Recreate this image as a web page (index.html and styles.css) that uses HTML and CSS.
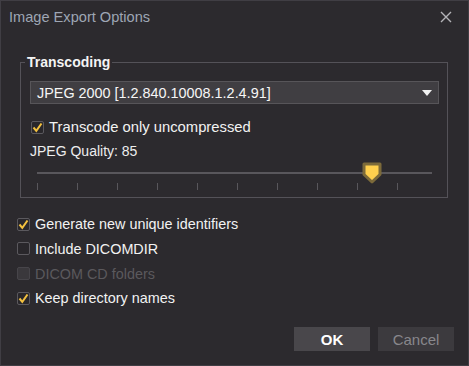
FILE: index.html
```html
<!DOCTYPE html>
<html lang="en">
<head>
    <meta charset="UTF-8">
    <title>Image Export Options</title>
    <link rel="stylesheet" href="styles.css">
</head>
<body>
    <div class="dialog">
        <div class="title-bar">
            <span class="title">Image Export Options</span>
            <svg class="close" width="12" height="12" viewBox="0 0 12 12">
                <path d="M1 1 L11 11 M11 1 L1 11" stroke="#b4b4b8" stroke-width="1.4" fill="none"/>
            </svg>
        </div>

        <fieldset class="group">
            <legend>Transcoding</legend>
            <div class="combo">
                <span>JPEG 2000 [1.2.840.10008.1.2.4.91]</span>
                <svg class="arrow" width="10" height="6" viewBox="0 0 10 6"><path d="M0 0 H10 L5 6 Z" fill="#f2f2f2"/></svg>
            </div>
            <label class="check checked">
                <span class="box"><svg width="11" height="11" viewBox="0 0 11 11"><path d="M1.5 5.5 L4.3 8.8 L9.5 1.5" stroke="#f3c13f" stroke-width="2" fill="none"/></svg></span>
                Transcode only uncompressed
            </label>
            <div class="quality">JPEG Quality: 85</div>
            <div class="slider">
                <div class="track"></div>
                <div class="ticks"></div>
                <svg class="handle" width="20" height="22" viewBox="0 0 20 22">
                    <path d="M2 2 H18 V12.5 L10 20 L2 12.5 Z" fill="#ffd04e" stroke="#7c6a3a" stroke-width="3" stroke-linejoin="round"/>
                </svg>
            </div>
        </fieldset>

        <div class="options">
            <label class="check checked">
                <span class="box"><svg width="11" height="11" viewBox="0 0 11 11"><path d="M1.5 5.5 L4.3 8.8 L9.5 1.5" stroke="#f3c13f" stroke-width="2" fill="none"/></svg></span>
                Generate new unique identifiers
            </label>
            <label class="check">
                <span class="box"></span>
                Include DICOMDIR
            </label>
            <label class="check disabled">
                <span class="box"></span>
                DICOM CD folders
            </label>
            <label class="check checked">
                <span class="box"><svg width="11" height="11" viewBox="0 0 11 11"><path d="M1.5 5.5 L4.3 8.8 L9.5 1.5" stroke="#f3c13f" stroke-width="2" fill="none"/></svg></span>
                Keep directory names
            </label>
        </div>

        <div class="buttons">
            <button class="ok">OK</button>
            <button class="cancel">Cancel</button>
        </div>
    </div>
</body>
</html>
```

FILE: styles.css
```css
body {
    margin: 0;
    padding: 0;
    background-color: #2c2a2e;
    font-family: 'Liberation Sans', Arial, sans-serif;
    color: #f0f0f0;
}

.dialog {
    width: 469px;
    height: 366px;
    box-sizing: border-box;
    border: 1px solid #403e44;
    background-color: #2c2a2e;
    position: relative;
}

.title-bar {
    display: flex;
    justify-content: space-between;
    align-items: center;
    height: 32px;
    padding: 0 16px 0 8px;
}

.title {
    font-size: 14.6px;
    color: #9ea6b4;
    margin-top: -1px;
}

.close {
    margin-top: -1px;
}

.group {
    margin: 21px 20px 0 19px;
    padding: 11px 8px 7px 9px;
    border: 1px solid #545258;
    border-radius: 0;
}

.group legend {
    font-weight: bold;
    font-size: 14px;
    line-height: 16px;
    color: #f4f4f4;
    padding: 0 2px;
    margin-left: -5px;
}

.combo {
    display: flex;
    justify-content: space-between;
    align-items: center;
    height: 21px;
    border: 1px solid #575559;
    background-color: #403e42;
    padding: 0 6px 0 6px;
    font-size: 14.4px;
    color: #f6f6f6;
}

.check {
    display: flex;
    align-items: center;
    font-size: 14.4px;
    height: 16px;
    color: #f2f2f2;
}

.box {
    width: 11px;
    height: 11px;
    border: 1px solid #5b595e;
    background-color: #29272b;
    border-radius: 2px;
    margin-right: 5px;
    display: flex;
    align-items: center;
    justify-content: center;
    flex-shrink: 0;
}

.group .check {
    margin-top: 15px;
    margin-left: 1px;
    font-size: 14.8px;
}

.quality {
    font-size: 14px;
    line-height: 16px;
    margin-top: 8px;
    color: #eeeeee;
}

.slider {
    position: relative;
    margin: 13px 0 0 7px;
    width: 395px;
    height: 18px;
}

.track {
    height: 2px;
    background-color: #59575c;
}

.ticks {
    margin-top: 9px;
    width: 361px;
    height: 7px;
    background: repeating-linear-gradient(to right, #59575c 0 1px, transparent 1px 40px);
}

.handle {
    position: absolute;
    left: 325px;
    top: -10px;
}

.options {
    padding: 18px 0 0 16px;
    display: flex;
    flex-direction: column;
    gap: 8.8px;
}

.check.disabled {
    color: #5b595d;
}

.check.disabled .box {
    background-color: #3a383c;
    border-color: #47454a;
}

.buttons {
    position: absolute;
    right: 14px;
    bottom: 14px;
    display: flex;
    gap: 8px;
}

button {
    width: 76px;
    height: 24px;
    border: none;
    font-family: 'Liberation Sans', Arial, sans-serif;
    font-size: 15px;
    padding: 0;
}

.ok {
    background-color: #49474b;
    color: #ffffff;
    font-weight: bold;
}

.cancel {
    background-color: #3c3a3e;
    color: #88878c;
}
```
